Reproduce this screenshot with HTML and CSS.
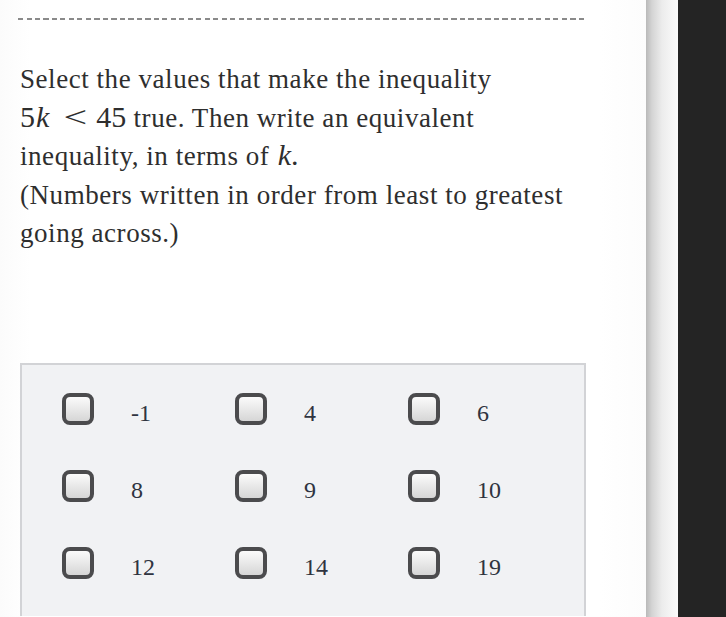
FILE: index.html
```html
<!DOCTYPE html>
<html>
<head>
<meta charset="utf-8">
<link rel="stylesheet" href="styles.css">
</head>
<body>
<div class="page">
  <main class="content">
    <div class="dash"></div>
    <p class="question">Select the values that make the inequality<br><span class="math">5<i>k</i><span class="rel">&lt;</span>45</span> true. Then write an equivalent<br>inequality, in terms of <span class="math"><i>k</i>.</span><br>(Numbers written in order from least to greatest<br>going across.)</p>
    <div class="choices">
      <label class="choice"><span class="box"></span><span class="num">-1</span></label>
      <label class="choice"><span class="box"></span><span class="num">4</span></label>
      <label class="choice"><span class="box"></span><span class="num">6</span></label>
      <label class="choice"><span class="box"></span><span class="num">8</span></label>
      <label class="choice"><span class="box"></span><span class="num">9</span></label>
      <label class="choice"><span class="box"></span><span class="num">10</span></label>
      <label class="choice"><span class="box"></span><span class="num">12</span></label>
      <label class="choice"><span class="box"></span><span class="num">14</span></label>
      <label class="choice"><span class="box"></span><span class="num">19</span></label>
    </div>
  </main>
  <div class="shadow"></div>
  <div class="dark"></div>
</div>
</body>
</html>
```
FILE: styles.css
```css
html, body {
  margin: 0;
  padding: 0;
  height: 100%;
  overflow: hidden;
}
.page {
  display: flex;
  height: 617px;
  background: #fff;
}
.content {
  width: 646px;
  flex: none;
  overflow: hidden;
  background: linear-gradient(to right, #fbfbfb 0, #ffffff 30px, #ffffff 600px, #fcfcfc 646px);
}
.dash {
  margin: 18px 0 0 18px;
  width: 569px;
  height: 2px;
  background: repeating-linear-gradient(to right, #8a8a8a 0, #8a8a8a 5px, transparent 5px, transparent 8.5px);
}
.question {
  margin: 40px 0 0 20px;
  width: 600px;
  font-family: "Liberation Serif", "Times New Roman", serif;
  font-size: 27px;
  letter-spacing: 0.55px;
  line-height: 38.5px;
  color: #2e2e2e;
  white-space: nowrap;
}
.math {
  font-family: "Liberation Serif", "Times New Roman", serif;
  font-size: 30px;
  letter-spacing: 0;
  line-height: 1;
}
.math i {
  font-style: italic;
  margin-left: 1px;
}
.rel {
  display: inline-block;
  margin: 0 12px 0 18px;
  transform: scaleX(1.4);
}
.choices {
  margin: 110px 0 0 20px;
  width: 566px;
  height: 253px;
  box-sizing: border-box;
  border: 2px solid #d2d3d6;
  border-bottom: 0;
  background: #f1f2f4;
  padding: 29px 0 0 40px;
  display: grid;
  grid-template-columns: 173px 173px 173px;
  grid-auto-rows: 31px;
  row-gap: 46px;
}
.choice {
  display: flex;
  align-items: center;
}
.box {
  width: 32px;
  height: 32px;
  box-sizing: border-box;
  border: 4px solid #4b4b4d;
  border-radius: 8px;
  background: linear-gradient(to bottom, #fbfbfb, #d6d6d6);
  flex: none;
}
.num {
  margin-left: 37px;
  padding-top: 9px;
  font-family: "Liberation Serif", "Times New Roman", serif;
  font-size: 24px;
  color: #2f3440;
}
.shadow {
  width: 32px;
  flex: none;
  background: linear-gradient(to right, #b9b9b9 0, #d4d4d4 6px, #ececec 16px, #f6f6f6 26px, #fafafa 32px);
}
.dark {
  flex: 1;
  background: #242424;
}
```
